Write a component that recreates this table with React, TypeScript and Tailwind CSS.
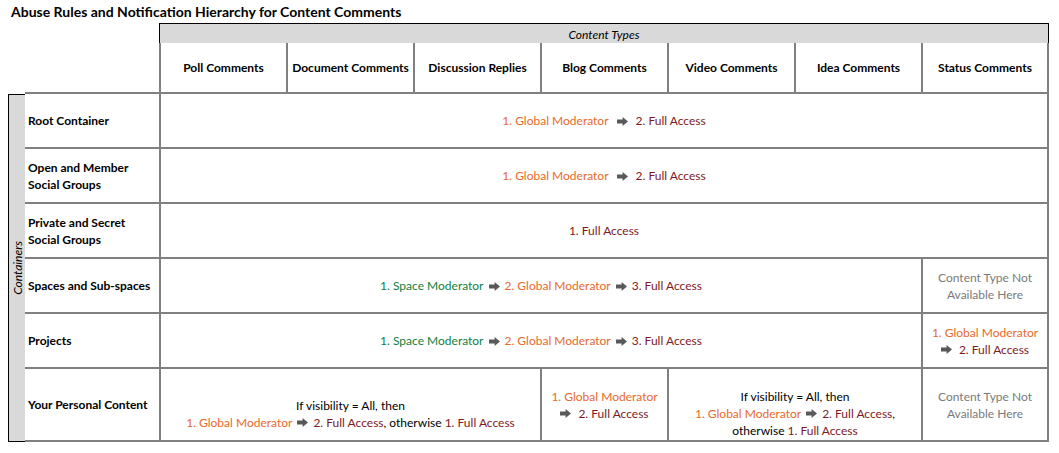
import React from 'react'

const orange = 'text-[#e8692c]'
const red = 'text-[#7d1a24]'
const green = 'text-[#11803d]'

function Arrow({ className = 'mx-[5px]' }: { className?: string }) {
  return (
    <svg
      viewBox="0 0 11 9"
      className={'inline-block h-[9px] w-[11px] align-[-0.5px] ' + className}
      fill="#595959"
    >
      <path d="M0 2.6h5.6V0L11 4.5 5.6 9V6.4H0z" />
    </svg>
  )
}

function GlobalFull({ gap = 'mx-[5px]' }: { gap?: string }) {
  return (
    <span>
      <span className={orange}>1. Global Moderator</span>
      <Arrow className={gap} />
      <span className={red}>2. Full Access</span>
    </span>
  )
}

function SpaceChain() {
  return (
    <span>
      <span className={green}>1. Space Moderator</span>
      <Arrow />
      <span className={orange}>2. Global Moderator</span>
      <Arrow />
      <span className={red}>3. Full Access</span>
    </span>
  )
}

function NotAvailable() {
  return (
    <span className="text-[#7a7a7a]">
      Content Type Not
      <br />
      Available Here
    </span>
  )
}

function Label({
  children,
  className = '',
}: {
  children: React.ReactNode
  className?: string
}) {
  return (
    <div
      className={
        'col-start-3 flex items-center border-t-2 border-[#808080] pl-[3px] font-bold ' +
        className
      }
    >
      {children}
    </div>
  )
}

function Cell({
  children,
  className = '',
}: {
  children?: React.ReactNode
  className?: string
}) {
  return (
    <div
      className={
        'flex items-center justify-center border-t-2 border-l-2 border-[#808080] text-center ' +
        className
      }
    >
      <div>{children}</div>
    </div>
  )
}

const contentTypes = [
  { label: 'Poll Comments', col: 'col-start-4' },
  { label: 'Document Comments', col: 'col-start-5' },
  { label: 'Discussion Replies', col: 'col-start-6' },
  { label: 'Blog Comments', col: 'col-start-7' },
  { label: 'Video Comments', col: 'col-start-8' },
  { label: 'Idea Comments', col: 'col-start-9' },
  { label: 'Status Comments', col: 'col-start-10 border-r-2' },
]

export default function App() {
  return (
    <div className="h-[453px] w-[1059px] bg-white font-['Lato',sans-serif] text-[12px] leading-[17px] text-black">
      <div className="h-[23px] pl-[11px] pt-[3px] text-[14px] font-bold leading-[17px]">
        Abuse Rules and Notification Hierarchy for Content Comments
      </div>

      <div className="grid grid-cols-[8px_17px_134px_repeat(6,127px)_128px] grid-rows-[20px_49px_55px_55px_55px_55px_55px_75px]">
        <div className="col-span-7 col-start-4 row-start-1 flex items-center justify-center border-t border-r border-l border-black bg-[#d9d9d9] pt-[1px] italic">
          Content Types
        </div>

        {contentTypes.map((t) => (
          <div
            key={t.label}
            className={
              'row-start-2 flex items-center justify-center border-l-2 border-[#808080] font-bold ' +
              t.col
            }
          >
            {t.label}
          </div>
        ))}

        <div className="col-start-2 row-span-6 row-start-3 mt-[2px] flex items-center justify-center border-t border-b border-l border-black bg-[#d9d9d9]">
          <span className="rotate-180 italic [writing-mode:vertical-rl]">Containers</span>
        </div>

        {/* root container */}
        <Label className="row-start-3">Root Container</Label>
        <Cell className="col-span-7 col-start-4 row-start-3 border-r-2">
          <GlobalFull gap="mx-[8px]" />
        </Cell>

        {/* social groups */}
        <Label className="row-start-4">
          <span>
            Open and Member
            <br />
            Social Groups
          </span>
        </Label>
        <Cell className="col-span-7 col-start-4 row-start-4 border-r-2">
          <GlobalFull gap="mx-[8px]" />
        </Cell>

        <Label className="row-start-5">
          <span>
            Private and Secret
            <br />
            Social Groups
          </span>
        </Label>
        <Cell className="col-span-7 col-start-4 row-start-5 border-r-2">
          <span className={red}>1. Full Access</span>
        </Cell>

        {/* spaces */}
        <Label className="row-start-6">Spaces and Sub-spaces</Label>
        <Cell className="col-span-6 col-start-4 row-start-6">
          <SpaceChain />
        </Cell>
        <Cell className="col-start-10 row-start-6 border-r-2">
          <NotAvailable />
        </Cell>

        {/* projects */}
        <Label className="row-start-7">Projects</Label>
        <Cell className="col-span-6 col-start-4 row-start-7">
          <SpaceChain />
        </Cell>
        <Cell className="col-start-10 row-start-7 border-r-2">
          <span className={orange}>1. Global Moderator</span>
          <br />
          <Arrow className="mr-[7px]" />
          <span className={red}>2. Full Access</span>
        </Cell>

        {/* personal content */}
        <Label className="row-start-8 border-b-2">Your Personal Content</Label>
        <Cell className="col-span-3 col-start-4 row-start-8 border-b-2 pt-[18px]">
          If visibility = All, then
          <br />
          <GlobalFull />, otherwise <span className={red}>1. Full Access</span>
        </Cell>
        <Cell className="col-start-7 row-start-8 border-b-2">
          <span className={orange}>1. Global Moderator</span>
          <br />
          <Arrow className="mr-[7px]" />
          <span className={red}>2. Full Access</span>
        </Cell>
        <Cell className="col-span-2 col-start-8 row-start-8 border-b-2 pt-[17px]">
          If visibility = All, then
          <br />
          <GlobalFull />,
          <br />
          otherwise <span className={red}>1. Full Access</span>
        </Cell>
        <Cell className="col-start-10 row-start-8 border-r-2 border-b-2">
          <NotAvailable />
        </Cell>
      </div>
    </div>
  )
}
